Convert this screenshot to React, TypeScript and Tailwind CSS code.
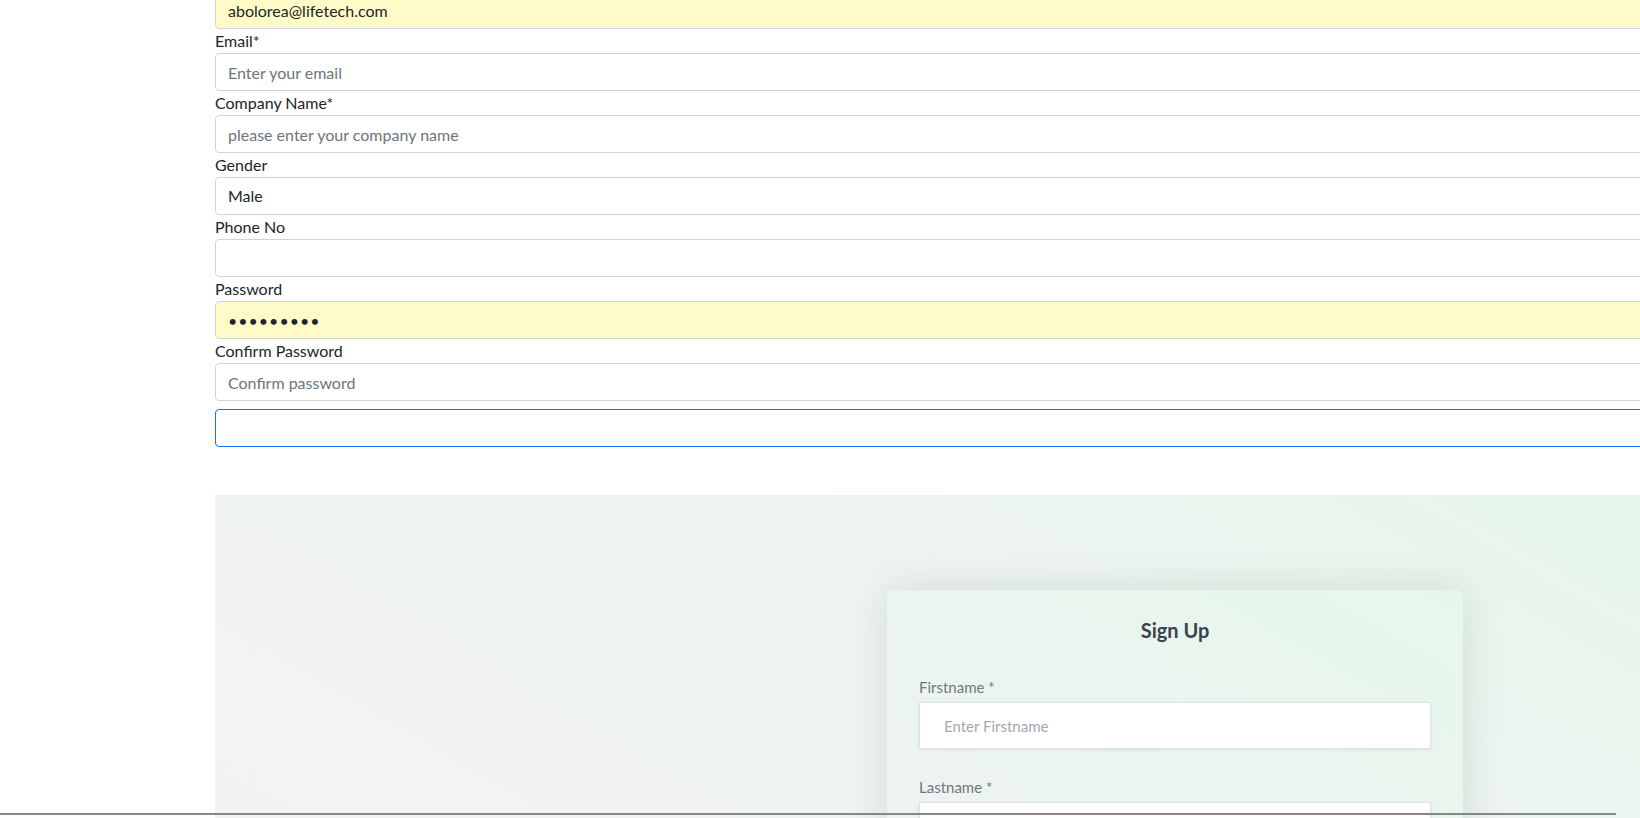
import { useState } from "react";

const FONT = "font-['Lato','Noto_Sans',sans-serif]";

type Field = {
  label: string;
  placeholder?: string;
  value?: string;
  type?: string;
  autofill?: boolean;
};

const FIELDS: Field[] = [
  { label: "Email*", placeholder: "Enter your email", type: "email" },
  { label: "Company Name*", placeholder: "please enter your company name" },
];

const FIELDS_AFTER: Field[] = [
  { label: "Phone No", type: "tel" },
  { label: "Password", type: "password", value: "secret123", autofill: true },
  { label: "Confirm Password", placeholder: "Confirm password", type: "password" },
];

function FormInput({ field }: { field: Field }) {
  const [value, setValue] = useState(field.value ?? "");
  return (
    <div className="flex flex-col">
      <label className="text-[16px] leading-6 text-[#212529]">{field.label}</label>
      <input
        type={field.type ?? "text"}
        value={value}
        onChange={(e) => setValue(e.target.value)}
        placeholder={field.placeholder}
        className={[
          "h-[38px] w-full rounded border border-[#ced4da] px-3 text-[16px] text-[#212529] outline-none placeholder:text-[#6c757d]",
          field.autofill ? "bg-[#fffbc8] tracking-[1px]" : "bg-white",
        ].join(" ")}
      />
    </div>
  );
}

function CardField({ label, placeholder }: { label: string; placeholder: string }) {
  return (
    <div className="flex flex-col">
      <label className="mb-[6px] text-[15px] leading-[18px] text-[#6f7882]">{label}</label>
      <input
        type="text"
        placeholder={placeholder}
        className="h-[47px] w-full border border-[#dde1e8] bg-white px-6 text-[15px] text-[#3f4852] shadow-[0_1px_3px_rgba(0,0,0,0.08)] outline-none placeholder:text-[#a1a8b2]"
      />
    </div>
  );
}

export default function App() {
  const [gender, setGender] = useState("Male");

  return (
    <div className={["relative h-[818px] w-[1640px] overflow-hidden bg-white", FONT].join(" ")}>
      <div className="-mt-[9px] ml-[215px] w-[1920px]">
        {/* 上部フォーム */}
        <input
          type="text"
          defaultValue="abolorea@lifetech.com"
          className="h-[38px] w-full rounded border border-[#ced4da] bg-[#fffbc8] px-3 text-[16px] text-[#212529] outline-none"
        />
        {FIELDS.map((f) => (
          <FormInput key={f.label} field={f} />
        ))}
        <div className="flex flex-col">
          <label className="text-[16px] leading-6 text-[#212529]">Gender</label>
          <select
            value={gender}
            onChange={(e) => setGender(e.target.value)}
            className="h-[38px] w-full appearance-none rounded border border-[#ced4da] bg-white px-3 text-[16px] text-[#212529] outline-none"
          >
            <option>Male</option>
            <option>Female</option>
          </select>
        </div>
        {FIELDS_AFTER.map((f) => (
          <FormInput key={f.label} field={f} />
        ))}
        <input
          type="text"
          className="mt-2 h-[38px] w-full rounded border border-[#1b6ef3] bg-white px-3 text-[16px] outline-none"
        />

        {/* サインアップ セクション */}
        <section className="mt-[48px] h-[400px] bg-[linear-gradient(30deg,#f2f2f4_0%,#eff3f2_45%,#e0f8e7_100%)] pt-[95px]">
          <div className="mx-auto w-[576px] rounded-md bg-[linear-gradient(30deg,#eef2f2_0%,#eaf5ef_50%,#e5f7ec_100%)] px-8 pt-[25px] pb-10 shadow-[0_0_40px_rgba(20,60,35,0.13)]">
            <h2 className="text-center text-[20px] font-bold leading-[30px] text-[#3a434d]">Sign Up</h2>
            <div className="mt-[33px] flex flex-col gap-[29px]">
              <CardField label="Firstname *" placeholder="Enter Firstname" />
              <CardField label="Lastname *" placeholder="Enter Lastname" />
            </div>
          </div>
        </section>
      </div>

      {/* 横スクロールバー */}
      <div className="absolute left-0 top-[813px] h-[2px] w-[1616px] bg-[#858885]" />
    </div>
  );
}
